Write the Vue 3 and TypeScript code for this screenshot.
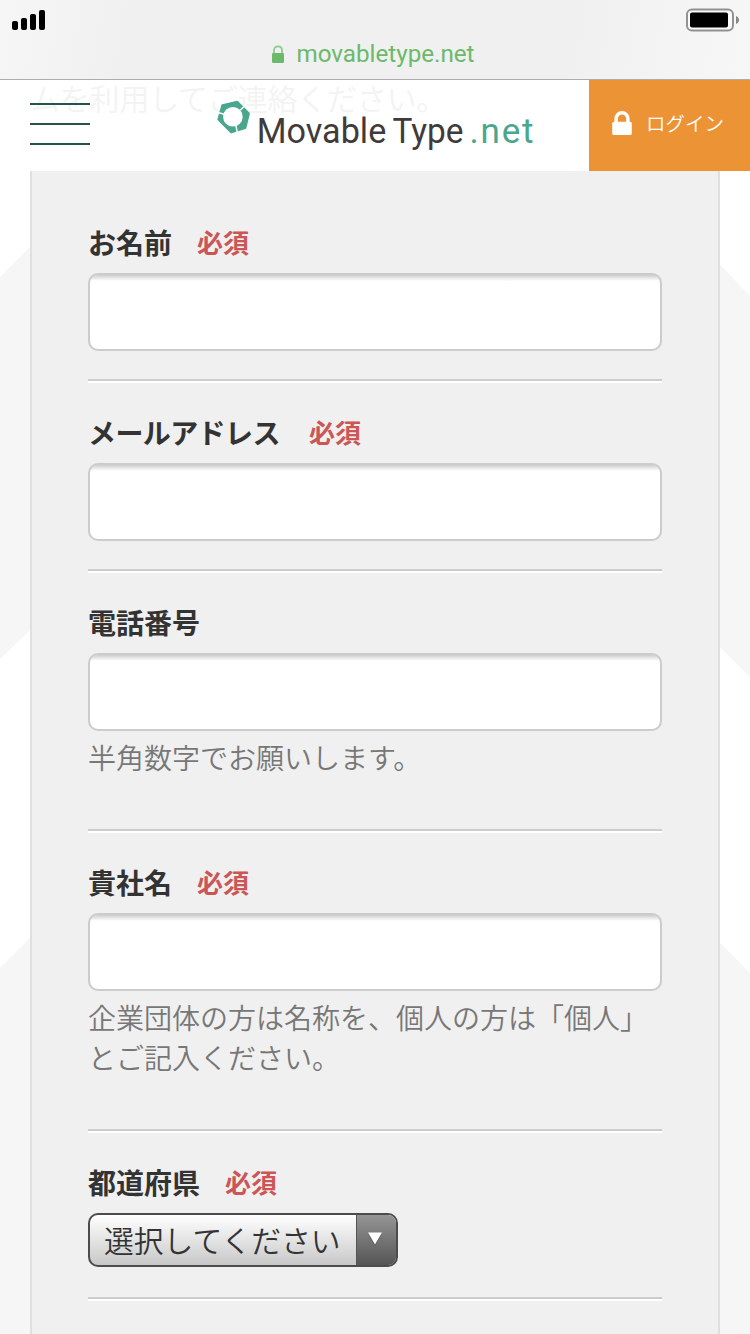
<script setup lang="ts">
interface Field {
  id: string
  label: string
  required: boolean
  kind: 'text' | 'select'
  help?: string[]
}

const fields: Field[] = [
  { id: 'name', label: 'お名前', required: true, kind: 'text' },
  { id: 'mail', label: 'メールアドレス', required: true, kind: 'text' },
  { id: 'tel', label: '電話番号', required: false, kind: 'text', help: ['半角数字でお願いします。'] },
  {
    id: 'company',
    label: '貴社名',
    required: true,
    kind: 'text',
    help: ['企業団体の方は名称を、個人の方は「個人」', 'とご記入ください。'],
  },
  { id: 'pref', label: '都道府県', required: true, kind: 'select' },
]
</script>

<template>
  <div class="screen">
    <svg class="backdrop" width="750" height="1334" viewBox="0 0 750 1334" aria-hidden="true">
      <path d="M0 277 375 -98 750 296V677L375 302 0 659ZM0 968 375 593 750 973V1334H0Z" fill="#f6f6f6" />
    </svg>

    <div class="browser-bar">
      <svg class="signal" width="34" height="20" viewBox="0 0 34 20">
        <rect x="0" y="11" width="6" height="9" rx="2" />
        <rect x="9" y="8" width="6" height="12" rx="2" />
        <rect x="18" y="4" width="6" height="16" rx="2" />
        <rect x="27" y="0" width="6" height="20" rx="2" />
      </svg>
      <div class="address">
        <svg width="14" height="19" viewBox="0 0 14 19">
          <path d="M3 9V5.5C3 2.9 4.7 1.3 7 1.3s4 1.6 4 4.2V9" fill="none" stroke="#8dcc8b" stroke-width="1.8" />
          <rect x="1" y="8" width="12" height="10" rx="1.3" fill="#6bb96a" />
        </svg>
        <svg width="182" height="34" viewBox="0 0 182 34">
          <text class="host" x="0.5" y="25" textLength="178" lengthAdjust="spacingAndGlyphs">movabletype.net</text>
        </svg>
      </div>
      <svg class="battery" width="54" height="24" viewBox="0 0 54 24">
        <rect x="1" y="1.5" width="46" height="21" rx="5" fill="#fafafa" stroke="#929292" stroke-width="2" />
        <rect x="4" y="4.5" width="38" height="15" rx="2" />
        <path d="M50 8c4 1.8 4 6.2 0 8Z" fill="#858585" />
      </svg>
    </div>

    <header class="site-header">
      <p class="lead">ムを利用してご連絡ください。</p>
      <button class="menu" aria-label="menu"><i></i><i></i><i></i></button>
      <svg class="logo" width="330" height="60" viewBox="210 95 330 60">
        <path
          d="M222.5 105.3 237.3 102 248.7 113.6 245.2 127.8 231.2 132.2 218.6 119.4Z"
          fill="#4aa68c" stroke="#4aa68c" stroke-width="2.4" stroke-linejoin="round"
        />
        <circle cx="232.9" cy="116.8" r="9.8" fill="#fff" />
        <path d="M225 114.4 217 112.3M240.2 110.2 246 104.5M235.8 125 237.5 133.5" stroke="#fff" stroke-width="1.5" />
        <text class="word dark" x="256.8" y="142.7" textLength="129.5" lengthAdjust="spacingAndGlyphs">Movable</text>
        <text class="word dark" x="392.5" y="142.7" textLength="71" lengthAdjust="spacingAndGlyphs">Type</text>
        <text class="word green" x="469.5" y="142.7" textLength="64" lengthAdjust="spacing">.net</text>
      </svg>
      <a class="login">
        <svg width="20" height="24" viewBox="0 0 20 24">
          <path d="M4.1 12V7.8C4.1 4.2 6.6 1.8 10 1.8s5.9 2.4 5.9 6V12" fill="none" stroke="#fff" stroke-width="3.4" />
          <rect x="0.2" y="10.8" width="19.6" height="13.2" rx="1.6" fill="#fff" />
        </svg>
        <span>ログイン</span>
      </a>
    </header>

    <form class="card">
      <div v-for="f in fields" :key="f.id" class="field" :class="{ helped: f.help, choice: f.kind === 'select' }">
        <label :for="f.id"><span :class="{ kana: f.id === 'mail' }">{{ f.label }}</span><em v-if="f.required">必須</em></label>
        <input v-if="f.kind === 'text'" :id="f.id" type="text" />
        <div v-else class="select">
          <span class="value">選択してください</span>
          <span class="arrow">
            <svg width="16" height="14" viewBox="0 0 16 14">
              <path d="M1 2H15L8 14Z" fill="#444" opacity=".5" />
              <path d="M1 .5H15L8 12.5Z" fill="#fff" />
            </svg>
          </span>
        </div>
        <p v-if="f.help" class="help">
          <span v-for="line in f.help" :key="line">{{ line }}</span>
        </p>
      </div>
    </form>
  </div>
</template>

<style>
body {
  margin: 0;
  background: #fff;
}
</style>

<style scoped>
* {
  box-sizing: border-box;
}
.screen {
  position: relative;
  width: 750px;
  height: 1334px;
  overflow: hidden;
  display: flex;
  flex-direction: column;
  background: #fff;
  color: #333;
  font-family: "Noto Sans CJK JP", sans-serif;
  font-weight: 350;
}
.backdrop {
  position: absolute;
  inset: 0;
}
.browser-bar {
  position: relative;
  z-index: 2;
  flex: none;
  height: 80px;
  display: grid;
  grid-template-columns: 1fr auto 1fr;
  align-items: start;
  background: linear-gradient(100deg, #f6f6f6 0, #f0f0f0 17%, #f0f0f0 76%, #f7f7f7 100%);
  border-bottom: 1px solid #adadad;
}
.signal {
  margin: 10px 0 0 12px;
}
.address {
  display: flex;
  align-items: center;
  gap: 11px;
  margin-top: 37px;
  padding-right: 1px;
}
.host {
  font: 400 24.5px Roboto, sans-serif;
  fill: #6bb96a;
}
.battery {
  justify-self: end;
  margin: 8px 10px 0 0;
}
.site-header {
  position: relative;
  z-index: 1;
  flex: none;
  height: 91px;
  display: flex;
  align-items: flex-start;
  background: #fff;
}
.lead {
  position: absolute;
  left: 30px;
  top: -3px;
  margin: 0;
  font-size: 29.8px;
  line-height: 40px;
  color: #f3f3f3;
  white-space: nowrap;
}
.menu {
  position: relative;
  display: flex;
  flex-direction: column;
  gap: 18px;
  width: 60px;
  margin: 23px 120px 0 30px;
  padding: 0;
  border: 0;
  background: none;
}
.menu i {
  height: 2px;
  background: #245448;
}
.logo {
  position: relative;
  margin-top: 15px;
}
.word {
  font: 400 35px Roboto, sans-serif;
}
.dark {
  fill: #403b3a;
}
.green {
  fill: #4aa68c;
}
.login {
  display: flex;
  align-items: center;
  gap: 14px;
  width: 161px;
  height: 91px;
  margin-left: auto;
  padding: 0 0 5px 23px;
  background: #ec9335;
  color: #fff;
  font-size: 19.5px;
  white-space: nowrap;
}
.login span {
  padding-bottom: 2px;
}
.card {
  position: relative;
  flex: 1;
  width: 690px;
  margin: 0 30px;
  padding: 20px 56px 0;
  background: #f0f0f0;
  border: solid #e0e0e0;
  border-width: 0 2px;
}
.field {
  height: 190px;
  padding-top: 31px;
  border-bottom: 2px solid #ccc;
  box-shadow: 0 2px #fff;
}
.field.helped {
  height: auto;
  padding-bottom: 52px;
}
.field.choice {
  height: 168px;
}
label {
  display: flex;
  align-items: center;
  height: 40px;
  margin-bottom: 11px;
  font-size: 28px;
  font-weight: 700;
  line-height: 40px;
}
.kana {
  width: 196px;
  letter-spacing: -0.6px;
}
em {
  margin-left: 25px;
  color: #c55;
  font-size: 26px;
  font-style: normal;
}
input {
  display: block;
  width: 574px;
  height: 78px;
  border: 2px solid #ccc;
  border-radius: 10px;
  background: linear-gradient(#ccc 0, #e8e8e8 3px, #fff 6px) padding-box;
  outline: none;
}
.help {
  margin: 6px 0 0;
  color: #777;
  font-size: 28px;
  line-height: 40px;
}
.help span {
  display: block;
  white-space: nowrap;
}
.select {
  display: flex;
  width: 310px;
  height: 54px;
  border: 2px solid #4c4c4c;
  border-radius: 10px;
  overflow: hidden;
  background: linear-gradient(#fff, #c8c8c8);
}
.value {
  flex: 1;
  padding-left: 14px;
  font-size: 29.8px;
  line-height: 48px;
  white-space: nowrap;
}
.arrow {
  display: grid;
  place-items: center;
  width: 40px;
  padding: 0 3px 2px 0;
  border-left: 1px solid #555;
  background: linear-gradient(#959595, #555);
}
</style>
